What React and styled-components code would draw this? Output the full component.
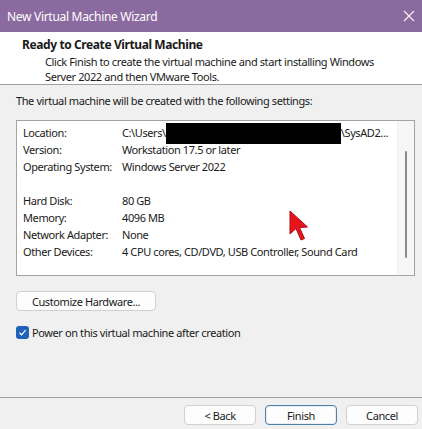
import React from 'react';
import styled, { createGlobalStyle } from 'styled-components';

const GlobalStyle = createGlobalStyle`
  html, body {
    margin: 0;
    padding: 0;
    background: #f0f0f0;
  }
  * { box-sizing: border-box; }
`;

const Window = styled.div`
  width: 422px;
  height: 429px;
  display: flex;
  flex-direction: column;
  font-family: "Noto Sans", "Liberation Sans", sans-serif;
  font-size: 11px;
  letter-spacing: -0.4px;
  color: #1a1a1a;
  background: #f0f0f0;
  overflow: hidden;
`;

const TitleBar = styled.div`
  height: 32px;
  flex: none;
  display: flex;
  align-items: center;
  justify-content: space-between;
  padding: 0 6px 0 7px;
  background: #8b6aa0;
  color: #ffffff;
  font-size: 12px;
  letter-spacing: -0.3px;
`;

const CloseIcon = styled.svg`
  width: 12px;
  height: 12px;
  margin-right: 1px;
`;

const Header = styled.div`
  height: 53px;
  flex: none;
  background: #ffffff;
  border-bottom: 1px solid #a0a0a0;
  padding: 5px 0 0 22px;
`;

const HeaderTitle = styled.div`
  font-weight: 700;
  font-size: 12px;
  line-height: 16px;
`;

const HeaderText = styled.div`
  padding-left: 23px;
  margin-top: 1px;
  line-height: 15px;
  margin-bottom: -2px;
`;

const Body = styled.div`
  flex: 1;
  display: flex;
  flex-direction: column;
  padding: 9px 7px 0 16px;
`;

const Intro = styled.div`
  line-height: 14px;
`;

const SettingsBox = styled.div`
  position: relative;
  margin-top: 12px;
  height: 156px;
  display: flex;
  background: #ffffff;
  border: 1px solid #a3a3a3;
`;

const SettingsList = styled.div`
  flex: 1;
  padding: 3px 0 0 6px;
  display: grid;
  grid-template-columns: 99px 1fr;
  grid-auto-rows: 17px;
  align-items: center;
  white-space: nowrap;
`;

const Gap = styled.div`
  grid-column: 1 / 3;
`;

const Redacted = styled.span`
  display: inline-block;
  width: 175px;
  height: 21px;
  background: #000;
  vertical-align: middle;
  margin: -4px 0 -4px 0;
`;

const ScrollTrack = styled.div`
  width: 17px;
  flex: none;
  display: flex;
  justify-content: center;
  padding-top: 30px;
  background: #f6f6f6;
  border-left: 1px solid #f0f0f0;
`;

const ScrollThumb = styled.div`
  width: 2px;
  height: 107px;
  background: #8a8a8a;
  border-radius: 1px;
`;

const Pointer = styled.svg`
  position: absolute;
  left: 272px;
  top: 89px;
  width: 22px;
  height: 34px;
`;

const Button = styled.button`
  font: inherit;
  letter-spacing: inherit;
  color: #1a1a1a;
  height: 20px;
  width: ${p => p.$width || 72}px;
  padding: 0;
  background: #fdfdfd;
  border: 1px solid ${p => (p.$default ? '#4f7fad' : '#d0d0d0')};
  border-radius: 4px;
  box-shadow: ${p => (p.$default ? 'inset 0 0 0 1px #e6eef7' : 'none')};
`;

const CustomizeRow = styled.div`
  margin-top: 15px;
  display: flex;
`;

const CheckRow = styled.label`
  margin-top: 14px;
  display: flex;
  align-items: center;
  gap: 3px;
`;

const CheckBox = styled.span`
  width: 13px;
  height: 13px;
  border-radius: 3px;
  background: #1f63b8;
  display: flex;
  align-items: center;
  justify-content: center;
`;

const Footer = styled.div`
  height: 32px;
  flex: none;
  border-top: 1px solid #a0a0a0;
  display: flex;
  justify-content: flex-end;
  align-items: flex-start;
  gap: 9px;
  padding: 7px 4px 0 0;
`;

const settings = [
  ['Location:', 'location'],
  ['Version:', 'Workstation 17.5 or later'],
  ['Operating System:', 'Windows Server 2022'],
  null,
  ['Hard Disk:', '80 GB'],
  ['Memory:', '4096 MB'],
  ['Network Adapter:', 'None'],
  ['Other Devices:', '4 CPU cores, CD/DVD, USB Controller, Sound Card'],
];

export default function App() {
  return (
    <>
      <GlobalStyle />
      <Window>
        <TitleBar>
          <span>New Virtual Machine Wizard</span>
          <CloseIcon viewBox="0 0 12 12">
            <path d="M1 1 L11 11 M11 1 L1 11" stroke="#f3eef6" strokeWidth="1.2" />
          </CloseIcon>
        </TitleBar>
        <Header>
          <HeaderTitle>Ready to Create Virtual Machine</HeaderTitle>
          <HeaderText>
            Click Finish to create the virtual machine and start installing Windows
            <br />
            Server 2022 and then VMware Tools.
          </HeaderText>
        </Header>
        <Body>
          <Intro>The virtual machine will be created with the following settings:</Intro>
          <SettingsBox>
            <SettingsList>
              {settings.map((row, i) =>
                row ? (
                  <React.Fragment key={i}>
                    <span>{row[0]}</span>
                    {row[1] === 'location' ? (
                      <span>
                        C:\Users\<Redacted />\SysAD2...
                      </span>
                    ) : (
                      <span>{row[1]}</span>
                    )}
                  </React.Fragment>
                ) : (
                  <Gap key={i} />
                )
              )}
            </SettingsList>
            <ScrollTrack>
              <ScrollThumb />
            </ScrollTrack>
            <Pointer viewBox="0 0 22 34">
              <path
                d="M1 1 L1 24 L7 18.5 L12 30 L15.5 28.5 L10.5 17.5 L18.5 17 Z"
                fill="#e8141b"
                stroke="#a80d12"
                strokeWidth="1"
                strokeLinejoin="round"
              />
            </Pointer>
          </SettingsBox>
          <CustomizeRow>
            <Button $width={140}>Customize Hardware...</Button>
          </CustomizeRow>
          <CheckRow>
            <CheckBox>
              <svg width="9" height="9" viewBox="0 0 9 9">
                <path d="M1.5 4.8 L3.6 6.8 L7.6 2.2" fill="none" stroke="#fff" strokeWidth="1.2" />
              </svg>
            </CheckBox>
            Power on this virtual machine after creation
          </CheckRow>
        </Body>
        <Footer>
          <Button>&lt; Back</Button>
          <Button $default>Finish</Button>
          <Button>Cancel</Button>
        </Footer>
      </Window>
    </>
  );
}
